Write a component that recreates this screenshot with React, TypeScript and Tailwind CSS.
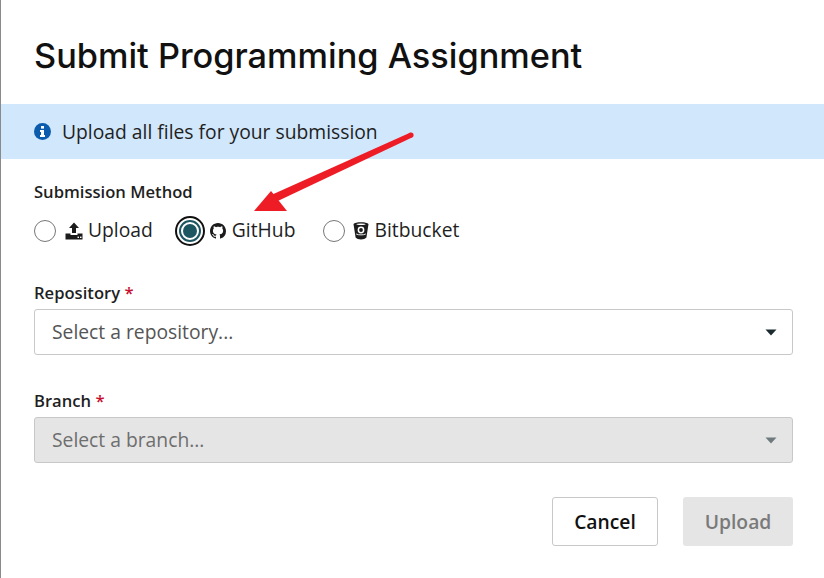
const OPEN = "font-['Open_Sans',sans-serif]"

function Radio({ checked }: { checked?: boolean }) {
  if (checked) {
    return (
      <span className="flex h-[30px] w-[30px] items-center justify-center rounded-full border-2 border-[#111]">
        <span className="flex h-[22px] w-[22px] items-center justify-center rounded-full border-2 border-[#1d5561] bg-white">
          <span className="h-[14px] w-[14px] rounded-full bg-[#1d5561]" />
        </span>
      </span>
    )
  }
  return <span className="h-[22px] w-[22px] rounded-full border border-[#777] bg-white" />
}

function UploadIcon() {
  return (
    <svg width="18" height="18" viewBox="0 0 18 18" fill="#1c1c1c">
      <path d="M9 0.5 L14 6 H11 V11 H7 V6 H4 Z" />
      <path d="M0.5 11.5 H5.5 V13 H12.5 V11.5 H17.5 V17.5 H0.5 Z" />
      <rect x="12.5" y="14.6" width="1.5" height="1.4" fill="#fff" />
      <rect x="15" y="14.6" width="1.5" height="1.4" fill="#fff" />
    </svg>
  )
}

function GithubIcon() {
  return (
    <svg width="16" height="16" viewBox="0 0 16 16" fill="#1c1c1c">
      <path d="M8 0C3.58 0 0 3.58 0 8c0 3.54 2.29 6.53 5.47 7.59.4.07.55-.17.55-.38 0-.19-.01-.82-.01-1.49-2.01.37-2.53-.49-2.69-.94-.09-.23-.48-.94-.82-1.13-.28-.15-.68-.52-.01-.53.63-.01 1.08.58 1.23.82.72 1.21 1.87.87 2.33.66.07-.52.28-.87.51-1.07-1.78-.2-3.64-.89-3.64-3.95 0-.87.31-1.59.82-2.15-.08-.2-.36-1.02.08-2.12 0 0 .67-.21 2.2.82.64-.18 1.32-.27 2-.27s1.36.09 2 .27c1.53-1.04 2.2-.82 2.2-.82.44 1.1.16 1.92.08 2.12.51.56.82 1.27.82 2.15 0 3.07-1.87 3.75-3.65 3.95.29.25.54.73.54 1.48 0 1.07-.01 1.93-.01 2.2 0 .21.15.46.55.38A8.01 8.01 0 0 0 16 8c0-4.42-3.58-8-8-8z" />
    </svg>
  )
}

function BitbucketIcon() {
  return (
    <svg width="16" height="18" viewBox="0 0 16 18">
      <path d="M0.5 2 C2 -0.2 14 -0.2 15.5 2 L13.4 15.6 C11.5 18.2 4.5 18.2 2.6 15.6 Z" fill="#1c1c1c" />
      <ellipse cx="8" cy="2.2" rx="4.6" ry="0.8" fill="#fff" />
      <circle cx="8" cy="8" r="3.4" fill="#fff" />
      <circle cx="8" cy="8" r="1.9" fill="#1c1c1c" />
      <path d="M3.2 12 C5.5 13.2 10.5 13.2 12.8 12" stroke="#fff" strokeWidth="0.9" fill="none" />
    </svg>
  )
}

function Caret({ color }: { color: string }) {
  return (
    <svg width="12" height="7" viewBox="0 0 12 7">
      <path d="M0.5 0.5 H11.5 L6 6.5 Z" fill={color} />
    </svg>
  )
}

export default function App() {
  return (
    <div className={`relative h-[578px] w-[824px] overflow-hidden border-l border-[#8a8a8a] bg-white ${OPEN}`}>
      <h1 className="flex h-[104px] items-start pl-[33px] pt-[33px] font-['Inter',sans-serif] text-[34.3px] leading-[46px] font-[550] text-[#111]">
        Submit Programming Assignment
      </h1>

      <div className="flex h-[55px] items-center gap-[11px] bg-[#d1e7fb] pl-[33px] text-[19.3px] text-[#1f1f1f]">
        <svg width="17" height="17" viewBox="0 0 17 17">
          <circle cx="8.5" cy="8.5" r="8.5" fill="#0b5cad" />
          <rect x="7" y="3" width="3" height="2.6" fill="#fff" />
          <path d="M6 7 H10 V12 H11 V14 H6 V12 H7 V9 H6 Z" fill="#fff" />
        </svg>
        <span className="pt-[2px]">Upload all files for your submission</span>
      </div>

      <div className="pt-[22px] pr-[31px] pl-[33px]">
        <div className="text-[16.6px] leading-[22px] font-semibold text-[#1f1f1f]">Submission Method</div>

        <div className="mt-[13px] flex h-[30px] items-center text-[19.3px] text-[#1f1f1f]">
          <Radio />
          <span className="ml-[9px] flex items-center gap-[5px]">
            <UploadIcon />
            <span className="pb-[2px]">Upload</span>
          </span>
          <span className="ml-[22px] flex items-center gap-[5px]">
            <Radio checked />
            <GithubIcon />
            <span className="pb-[2px] pl-[1px]">GitHub</span>
          </span>
          <span className="ml-[28px] flex items-center">
            <Radio />
            <span className="ml-[8px]">
              <BitbucketIcon />
            </span>
            <span className="ml-[5px] pb-[2px]">Bitbucket</span>
          </span>
        </div>

        <div className="mt-[36px] text-[16.6px] leading-[22px] font-semibold text-[#1f1f1f]">
          Repository <span className="text-[#c8102e]">*</span>
        </div>
        <div className="mt-[5px] flex h-[46px] items-center justify-between rounded-[3px] border border-[#c8c8c8] bg-white pr-[15px] pl-[17px] text-[19.3px] text-[#555]">
          <span>Select a repository...</span>
          <Caret color="#1c2b30" />
        </div>

        <div className="mt-[35px] text-[16.6px] leading-[22px] font-semibold text-[#1f1f1f]">
          Branch <span className="text-[#c8102e]">*</span>
        </div>
        <div className="mt-[5px] flex h-[46px] items-center justify-between rounded-[3px] border border-[#c8c8c8] bg-[#e5e5e5] pr-[15px] pl-[17px] text-[19.3px] text-[#6e6e6e]">
          <span>Select a branch...</span>
          <Caret color="#6f7a7e" />
        </div>

        <div className="mt-[34px] flex justify-end gap-[25px]">
          <button className="h-[49px] w-[106px] rounded-[3px] border border-[#c8c8c8] bg-white pt-[2px] text-[19.3px] font-semibold text-[#111]">
            Cancel
          </button>
          <button className="h-[49px] w-[110px] rounded-[3px] bg-[#e5e5e5] pt-[2px] text-[19.3px] font-semibold text-[#7a7a7a]">
            Upload
          </button>
        </div>
      </div>

      {/* red annotation arrow drawn over the dialog */}
      <svg className="absolute top-0 left-0" width="824" height="578" viewBox="0 0 824 578" fill="none">
        <path d="M409.5 132.5 L268 196 L271.5 203.5 L411 137.5 Z" fill="#ee1c25" />
        <circle cx="410" cy="135" r="2.6" fill="#ee1c25" />
        <path d="M253 211 L270 191 L286 211 Z" fill="#ee1c25" />
      </svg>
    </div>
  )
}
